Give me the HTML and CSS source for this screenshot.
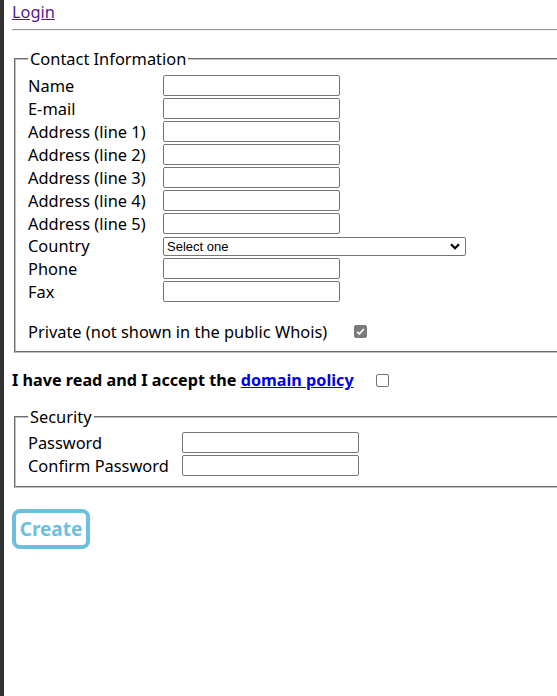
FILE: index.html
```html
<!DOCTYPE html>
<html>
<head>
<meta charset="utf-8">
<link rel="stylesheet" href="styles.css">
</head>
<body>
<div class="page">
  <div class="top"><a class="login" href="#">Login</a></div>
  <hr class="rule">
  <form class="form">
    <fieldset class="box contact">
      <legend class="legend">Contact Information</legend>
      <div class="grid">
        <label class="lbl">Name</label><input class="field" type="text">
        <label class="lbl">E-mail</label><input class="field" type="text">
        <label class="lbl">Address (line 1)</label><input class="field" type="text">
        <label class="lbl">Address (line 2)</label><input class="field" type="text">
        <label class="lbl">Address (line 3)</label><input class="field" type="text">
        <label class="lbl">Address (line 4)</label><input class="field" type="text">
        <label class="lbl">Address (line 5)</label><input class="field" type="text">
        <label class="lbl lbl-sel">Country</label><select class="sel"><option>Select one</option></select>
        <label class="lbl">Phone</label><input class="field" type="text">
        <label class="lbl">Fax</label><input class="field" type="text">
      </div>
      <div class="private">
        <span class="lbl">Private (not shown in the public Whois)</span>
        <input class="chk chk-on" type="checkbox" checked disabled>
      </div>
    </fieldset>
    <div class="accept">
      <span class="accept-text">I have read and I accept the <a class="policy" href="#">domain policy</a></span>
      <input class="chk" type="checkbox">
    </div>
    <fieldset class="box security">
      <legend class="legend">Security</legend>
      <div class="grid">
        <label class="lbl">Password</label><input class="field" type="password">
        <label class="lbl">Confirm Password</label><input class="field" type="password">
      </div>
    </fieldset>
    <button class="create" type="button">Create</button>
  </form>
</div>
</body>
</html>
```
FILE: styles.css
```css
html { overflow: hidden; background: #fff; }
body {
  margin: 0;
  min-height: 696px;
  border-left: 4px solid #333;
  padding: 0 0 0 8px;
  font-family: "Noto Sans", "Open Sans", sans-serif;
  font-size: 16.4px;
  color: #000;
}
.page { width: 600px; }
.top { height: 21px; line-height: 21px; padding-top: 1px; }
.login { color: #551a8b; }
.rule {
  margin: 7px 0 0 0;
  border: 0;
  border-top: 1px solid #9a9a9a;
  border-bottom: 1px solid #eee;
  height: 0;
}
.form { margin-top: 17px; }
.box {
  margin: 0 2px;
  border: 2px groove #c0c0c0;
  padding: 0 12px 9px 12px;
}
.legend { padding: 0 2px; line-height: 21px; }
.grid {
  display: grid;
  grid-template-columns: 135px 177px;
  row-gap: 2px;
  align-items: center;
  margin-top: 6px;
}
.lbl { line-height: 21px; white-space: nowrap; }
.field {
  box-sizing: border-box;
  width: 177px;
  height: 21px;
  margin: 0;
  border: 1px solid #767676;
  border-radius: 2px;
  padding: 1px 2px;
  font: 13px Arial, sans-serif;
}
.sel {
  box-sizing: border-box;
  width: 303px;
  height: 19px;
  margin: 1px 0 0 0;
  border: 1px solid #767676;
  border-radius: 2px;
  padding: 0 0 0 3px;
  font: 13px "Liberation Sans", Arial, sans-serif;
  color: #000;
  background: #fff url("data:image/svg+xml;utf8,<svg xmlns='http://www.w3.org/2000/svg' width='10' height='7' viewBox='0 0 10 7'><path d='M1 1.2 L5 5.2 L9 1.2' fill='none' stroke='black' stroke-width='2.2'/></svg>") no-repeat right 5px center;
  -webkit-appearance: none;
  appearance: none;
}
.lbl-sel { line-height: 20px; }
.private {
  display: flex;
  align-items: center;
  gap: 27px;
  margin-top: 19px;
}
.chk {
  -webkit-appearance: none;
  appearance: none;
  box-sizing: border-box;
  width: 13px;
  height: 13px;
  margin: 0;
  border: 1px solid #767676;
  border-radius: 2px;
  background: #fff;
}
.chk-on {
  border-color: #7a7a7a;
  background: #7a7a7a url("data:image/svg+xml;utf8,<svg xmlns='http://www.w3.org/2000/svg' width='11' height='11' viewBox='0 0 11 11'><path d='M2.2 5.8 L4.4 8 L8.8 3' fill='none' stroke='white' stroke-width='1.8'/></svg>") no-repeat center;
}
.accept {
  display: flex;
  align-items: center;
  gap: 22px;
  margin-top: 17px;
  line-height: 21px;
  font-size: 16.2px;
}
.accept-text { font-weight: bold; }
.policy { color: #0000ee; }
.security { margin-top: 15px; padding-bottom: 10px; }
.security .grid { grid-template-columns: 154px 177px; margin-top: 5px; }
.create {
  display: block;
  margin-top: 21px;
  box-sizing: border-box;
  width: 78px;
  height: 40px;
  border: 4px solid #6bbfe0;
  border-radius: 8px;
  background: #fff;
  color: #6bbfe0;
  font-family: "Noto Sans", "Open Sans", sans-serif;
  font-size: 19px;
  font-weight: bold;
  padding: 0 0 1px 0;
}
```
